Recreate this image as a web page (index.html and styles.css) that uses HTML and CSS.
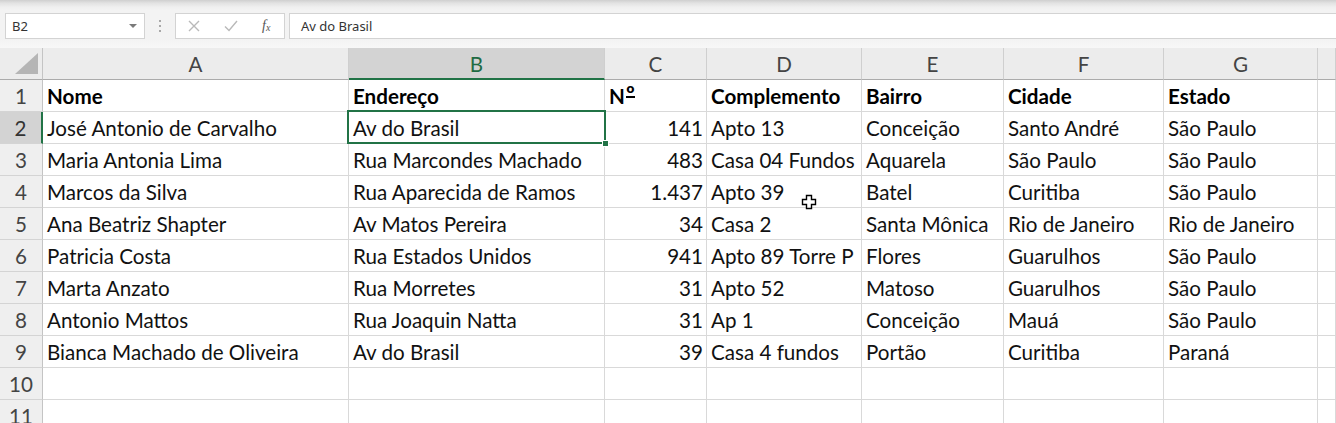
FILE: index.html
```html
<!DOCTYPE html>
<html lang="pt-BR">
<head>
<meta charset="utf-8">
<title>Planilha</title>
<link rel="stylesheet" href="styles.css">
</head>
<body>
<div class="app">
  <div class="topbar">
    <div class="namebox">
      <span>B2</span>
      <svg class="caret" width="10" height="6" viewBox="0 0 10 6"><path d="M1 1h8L5 5z" fill="#7a7a7a"/></svg>
    </div>
    <div class="dots"><i></i><i></i><i></i></div>
    <div class="fnbox">
      <svg width="12" height="12" viewBox="0 0 12 12"><path d="M1 1l10 10M11 1L1 11" stroke="#b9b9b9" stroke-width="1.4" fill="none"/></svg>
      <svg width="14" height="12" viewBox="0 0 14 12"><path d="M1 6.5l4 4L13 1" stroke="#b9b9b9" stroke-width="1.4" fill="none"/></svg>
      <span class="fx">f<sub>x</sub></span>
    </div>
    <div class="formula">Av do Brasil</div>
  </div>

  <div class="sheet">
    <div class="corner"><svg width="24" height="22" viewBox="0 0 24 22"><path d="M23 0V21H0z" fill="#b5b5b5"/></svg></div>
    <div class="ch">A</div><div class="ch sel">B</div><div class="ch">C</div><div class="ch">D</div><div class="ch">E</div><div class="ch">F</div><div class="ch">G</div><div class="ch"></div>

    <div class="rh">1</div>
    <div class="c b">Nome</div><div class="c b">Endereço</div><div class="c b">N<span class="ord">º</span></div><div class="c b">Complemento</div><div class="c b">Bairro</div><div class="c b">Cidade</div><div class="c b">Estado</div><div class="c"></div>

    <div class="rh sel">2</div>
    <div class="c">José Antonio de Carvalho</div><div class="c">Av do Brasil</div><div class="c n">141</div><div class="c">Apto 13</div><div class="c">Conceição</div><div class="c">Santo André</div><div class="c">São Paulo</div><div class="c"></div>

    <div class="rh">3</div>
    <div class="c">Maria Antonia Lima</div><div class="c">Rua Marcondes Machado</div><div class="c n">483</div><div class="c">Casa 04 Fundos</div><div class="c">Aquarela</div><div class="c">São Paulo</div><div class="c">São Paulo</div><div class="c"></div>

    <div class="rh">4</div>
    <div class="c">Marcos da Silva</div><div class="c">Rua Aparecida de Ramos</div><div class="c n">1.437</div><div class="c">Apto 39</div><div class="c">Batel</div><div class="c">Curitiba</div><div class="c">São Paulo</div><div class="c"></div>

    <div class="rh">5</div>
    <div class="c">Ana Beatriz Shapter</div><div class="c">Av Matos Pereira</div><div class="c n">34</div><div class="c">Casa 2</div><div class="c">Santa Mônica</div><div class="c">Rio de Janeiro</div><div class="c">Rio de Janeiro</div><div class="c"></div>

    <div class="rh">6</div>
    <div class="c">Patricia Costa</div><div class="c">Rua Estados Unidos</div><div class="c n">941</div><div class="c">Apto 89 Torre P</div><div class="c">Flores</div><div class="c">Guarulhos</div><div class="c">São Paulo</div><div class="c"></div>

    <div class="rh">7</div>
    <div class="c">Marta Anzato</div><div class="c">Rua Morretes</div><div class="c n">31</div><div class="c">Apto 52</div><div class="c">Matoso</div><div class="c">Guarulhos</div><div class="c">São Paulo</div><div class="c"></div>

    <div class="rh">8</div>
    <div class="c">Antonio Mattos</div><div class="c">Rua Joaquin Natta</div><div class="c n">31</div><div class="c">Ap 1</div><div class="c">Conceição</div><div class="c">Mauá</div><div class="c">São Paulo</div><div class="c"></div>

    <div class="rh">9</div>
    <div class="c">Bianca Machado de Oliveira</div><div class="c">Av do Brasil</div><div class="c n">39</div><div class="c">Casa 4 fundos</div><div class="c">Portão</div><div class="c">Curitiba</div><div class="c">Paraná</div><div class="c"></div>

    <div class="rh">10</div>
    <div class="c"></div><div class="c"></div><div class="c"></div><div class="c"></div><div class="c"></div><div class="c"></div><div class="c"></div><div class="c"></div>

    <div class="rh">11</div>
    <div class="c"></div><div class="c"></div><div class="c"></div><div class="c"></div><div class="c"></div><div class="c"></div><div class="c"></div><div class="c"></div>

    <div class="selection"><span class="handle"></span></div>
    <svg class="cursor" width="16" height="16" viewBox="0 0 16 16"><path d="M5.5 1.5h5v4h4v5h-4v4h-5v-4h-4v-5h4z" fill="#fff" stroke="#000" stroke-width="1.4"/></svg>
  </div>
</div>
</body>
</html>
```

FILE: styles.css
```css
* { box-sizing: border-box; }
html, body {
  margin: 0;
  padding: 0;
  background: #fff;
  width: 1336px;
  height: 423px;
  overflow: hidden;
}
.app {
  width: 1336px;
  height: 423px;
  overflow: hidden;
  font-family: "Noto Sans", "Open Sans", sans-serif;
}

/* formula bar */
.topbar {
  height: 48px;
  display: flex;
  align-items: flex-start;
  padding: 13px 0 0 5px;
  background: linear-gradient(#cfcfcf 0, #e2e2e2 3px, #efefef 7px, #f3f3f3 10px, #f3f3f3 40px, #f7f7f7 48px);
}
.namebox {
  width: 140px;
  height: 26px;
  background: #fff;
  border: 1px solid #d3d3d3;
  display: flex;
  align-items: center;
  justify-content: space-between;
  padding: 0 6px 0 6px;
  font-size: 13px;
  color: #333;
}
.dots {
  width: 30px;
  height: 26px;
  display: flex;
  flex-direction: column;
  align-items: center;
  justify-content: center;
  gap: 3px;
}
.dots i {
  display: block;
  width: 2px;
  height: 2px;
  background: #a8a8a8;
}
.fnbox {
  width: 110px;
  height: 26px;
  background: #fff;
  border: 1px solid #d3d3d3;
  display: flex;
  align-items: center;
  padding-left: 12px;
}
.fnbox svg:first-child { margin-right: 24px; }
.fnbox svg:nth-child(2) { margin-right: 24px; }
.fx {
  font-family: "Liberation Serif", serif;
  font-style: italic;
  font-size: 14px;
  color: #555;
}
.fx sub { font-size: 10px; vertical-align: -1px; }
.formula {
  flex: 1;
  margin-left: 4px;
  height: 26px;
  background: #fff;
  border: 1px solid #d3d3d3;
  border-right: none;
  display: flex;
  align-items: center;
  padding-left: 11px;
  font-size: 13px;
  color: #333;
}

/* sheet */
.sheet {
  position: relative;
  display: grid;
  grid-template-columns: 43px 306px 256px 102px 155px 142px 160px 154px 1fr;
  grid-auto-rows: 32px;
  font-family: Lato, "Noto Sans", sans-serif;
  font-size: 20.6px;
}
.corner {
  background: #ececec;
  border-right: 1px solid #c4c4c4;
  border-bottom: 1px solid #ababab;
  display: flex;
  align-items: flex-end;
  justify-content: flex-end;
  padding: 0 3px 4px 0;
}
.ch {
  background: #ececec;
  border-right: 1px solid #cfcfcf;
  border-bottom: 1px solid #ababab;
  display: flex;
  align-items: center;
  justify-content: center;
  color: #444;
  padding-top: 1px;
}
.ch.sel {
  background: #d3d3d3;
  color: #1f6b43;
  border-bottom: 2px solid #217346;
}
.rh {
  background: #efefef;
  border-right: 1px solid #c4c4c4;
  border-bottom: 1px solid #d4d4d4;
  display: flex;
  align-items: center;
  justify-content: center;
  color: #444;
}
.rh.sel {
  background: #d3d3d3;
  color: #333;
  border-right: 2px solid #217346;
}
.c {
  border-right: 1px solid #d9d9d9;
  border-bottom: 1px solid #d9d9d9;
  display: flex;
  align-items: center;
  padding: 0 3px 0 4px;
  white-space: nowrap;
  overflow: hidden;
  color: #111;
}
.c.b { font-weight: 700; color: #000; }
.c.n { justify-content: flex-end; }
.ord {
  display: inline-block;
  font-size: 22px;
  line-height: 12px;
  height: 10px;
  border-bottom: 2px solid #000;
  margin-left: 1px;
  align-self: flex-start;
  margin-top: 8px;
  overflow: visible;
}

.selection {
  position: absolute;
  left: 347px;
  top: 62px;
  width: 259px;
  height: 34px;
  border: 2px solid #217346;
  pointer-events: none;
}
.handle {
  position: absolute;
  right: -5px;
  bottom: -5px;
  width: 7px;
  height: 7px;
  background: #217346;
  border: 1px solid #fff;
}
.cursor {
  position: absolute;
  left: 801px;
  top: 146px;
}
```
